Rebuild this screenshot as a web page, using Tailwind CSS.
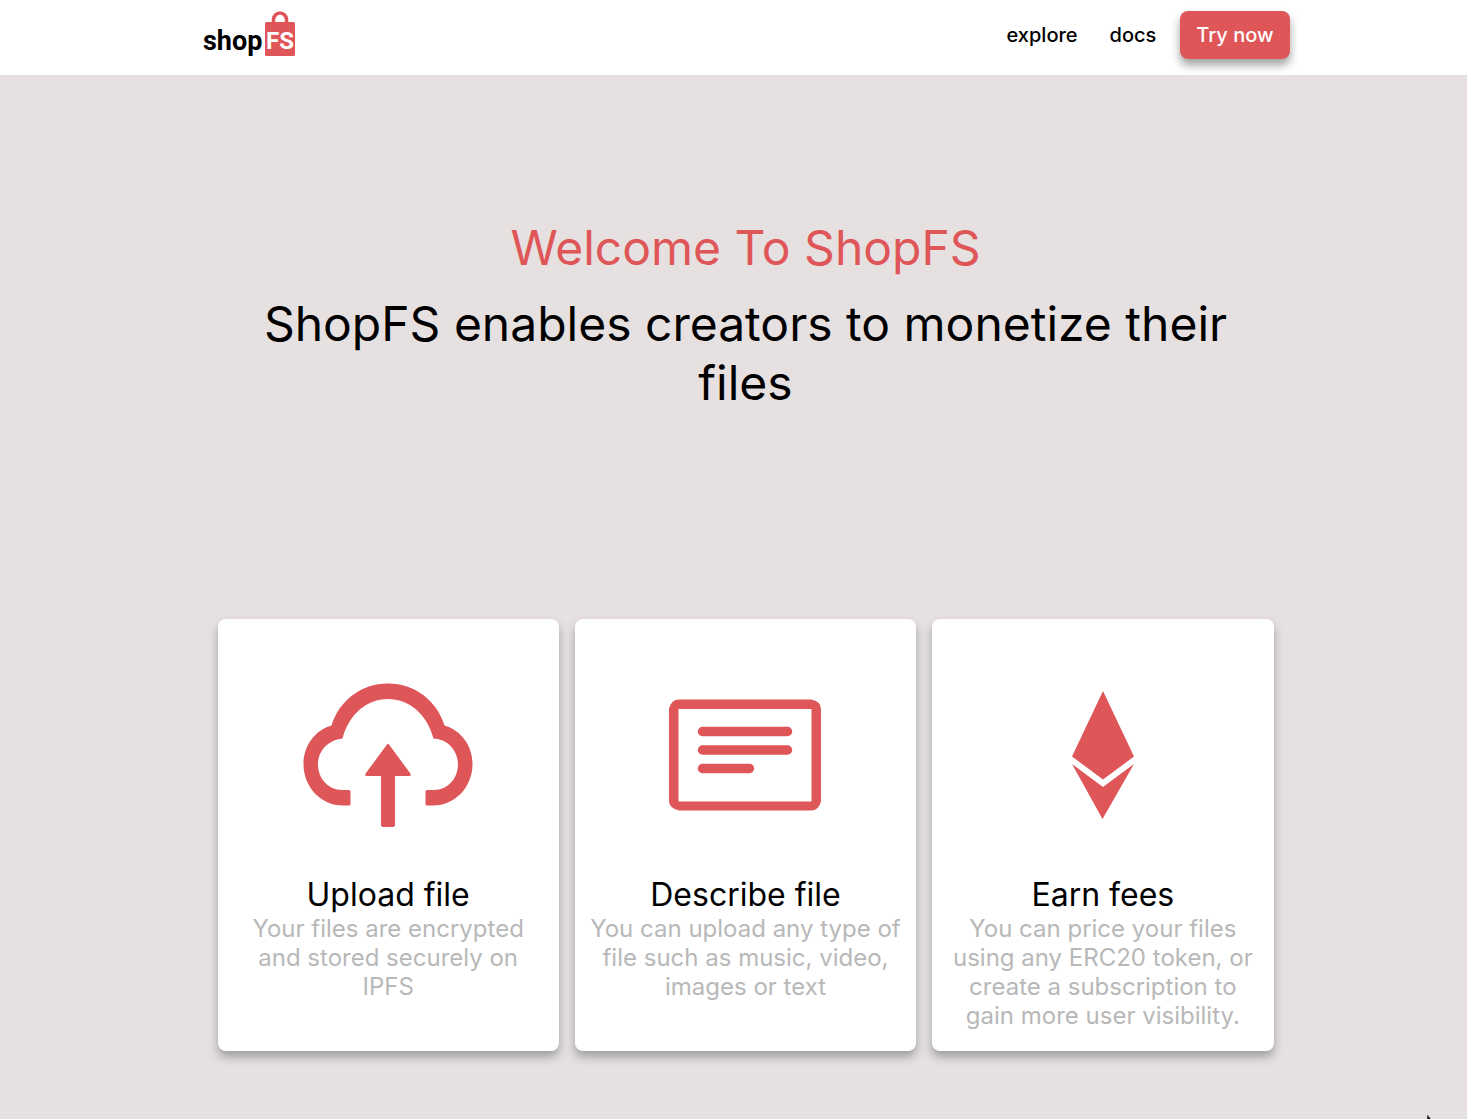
<!DOCTYPE html>
<html lang="en">
<head>
<meta charset="utf-8">
<meta name="viewport" content="width=device-width, initial-scale=1">
<title>ShopFS</title>
<script src="https://cdn.jsdelivr.net/npm/@tailwindcss/browser@4"></script>
</head>
<body class="min-h-screen overflow-x-hidden bg-[#e6e0e0] font-['Inter',sans-serif] text-black">
<header class="bg-white pl-6">
  <nav class="mx-auto flex h-[75px] max-w-[1088px] items-start justify-between pt-[11px]">
    <a href="#" aria-label="shopFS home">
      <svg class="h-12 w-24" viewBox="0 0 96 48">
        <path d="M71.500 17V9a6.500 7 0 0 1 13 0v8" fill="none" stroke="#df5658" stroke-width="3.500"/>
        <rect x="63" y="11" width="30" height="34" rx="1.500" fill="#df5658"/>
        <text x="1" y="39" font-family="Roboto, sans-serif" font-weight="700" font-size="27">shop</text>
        <text x="78" y="38" text-anchor="middle" fill="#fff" font-family="Roboto, sans-serif" font-weight="700" font-size="24">FS</text>
      </svg>
    </a>
    <div class="flex items-center text-xl font-medium">
      <a href="#" class="px-4">explore</a>
      <a href="#" class="pr-6 pl-4">docs</a>
      <button type="button" class="h-12 rounded-lg bg-[#df5658] px-4 text-white shadow-[0_6px_10px_#a0a0a0]">Try now</button>
    </div>
  </nav>
</header>
<main class="pl-6">
  <div class="mx-auto max-w-[1088px] px-4">
    <section class="flex h-[544px] flex-col pt-[143px] text-center text-5xl">
      <h1 class="leading-[60px] text-[#df5658]">Welcome To ShopFS</h1>
      <p class="mt-4 leading-[59px]">ShopFS enables creators to monetize their files</p>
    </section>
    <section class="grid grid-cols-3 gap-4 pb-16 text-center">
      <article class="min-h-[432px] rounded-lg bg-white px-3 pt-9 pb-5 shadow-[0_6px_10px_#a0a0a0]">
        <svg class="mx-auto size-50" viewBox="0 0 200 200" fill="#df5658">
          <path d="M43.500 70.500C51 46 73 28.500 100 28.500S149 46 156.500 70.500C173 75 184.500 91 184.500 109C184.500 132 167 150.500 145 150.500H139Q137.500 150.500 137.500 149V136.500Q137.500 135 139 135H146C160 135 170 123 170 109.500C170 96 160 84 145.500 83.500C139 59 121 44 100 44S61 59 54.500 83.500C40 85 30 96 30 109.500C30 123 40 135 54 135H61Q62.500 135 62.500 136.500V149Q62.500 150.500 61 150.500H55C33 150.500 15.500 132 15.500 109C15.500 91 27 75 43.500 70.500Z"/>
          <path d="M99 89.500Q100 88 101 89.500L122 118Q124 121 121 121H107V170Q107 172 105 172H95Q93 172 93 170V121H79Q76 121 78 118Z"/>
        </svg>
        <h2 class="mt-5 text-[32px] leading-10">Upload file</h2>
        <p class="-mt-px text-2xl leading-[29px] text-[#b8b8b8]">Your files are encrypted and stored securely on IPFS</p>
      </article>
      <article class="min-h-[432px] rounded-lg bg-white px-3 pt-9 pb-5 shadow-[0_6px_10px_#a0a0a0]">
        <svg class="mx-auto size-50" viewBox="0 0 200 200" fill="none" stroke="#df5658">
          <path fill="#df5658" stroke="none" fill-rule="evenodd" d="M34 44.500H166Q176 46 176 54V146Q174 155.500 166 155.500H34Q24 153 24 146V54Q26 44.500 34 44.500ZM33.500 54V146.500H166.500V54Z"/>
          <path stroke-width="9.500" stroke-linecap="round" d="M57.500 76.500H142.500M57.500 95H142.500M57.500 113.500H104.500"/>
        </svg>
        <h2 class="mt-5 text-[32px] leading-10">Describe file</h2>
        <p class="-mt-px text-2xl leading-[29px] text-[#b8b8b8]">You can upload any type of file such as music, video, images or text</p>
      </article>
      <article class="min-h-[432px] rounded-lg bg-white px-3 pt-9 pb-5 shadow-[0_6px_10px_#a0a0a0]">
        <svg class="mx-auto size-50" viewBox="0 0 200 200" fill="#df5658">
          <path d="M100 36L131 101.500L100 124.500L69 101.500ZM69 109L100 132L131 109L99.500 164Z"/>
        </svg>
        <h2 class="mt-5 text-[32px] leading-10">Earn fees</h2>
        <p class="-mt-px text-2xl leading-[29px] text-[#b8b8b8]">You can price your files using any ERC20 token, or create a subscription to gain more user visibility.</p>
      </article>
    </section>
  </div>
</main>
<svg class="pointer-events-none fixed right-7 bottom-0 h-1.5 w-3" viewBox="0 0 12 6" aria-hidden="true"><path d="M0 1L5 7H0Z" fill="#111" stroke="#fff" stroke-width=".5"/></svg>
</body>
</html>
